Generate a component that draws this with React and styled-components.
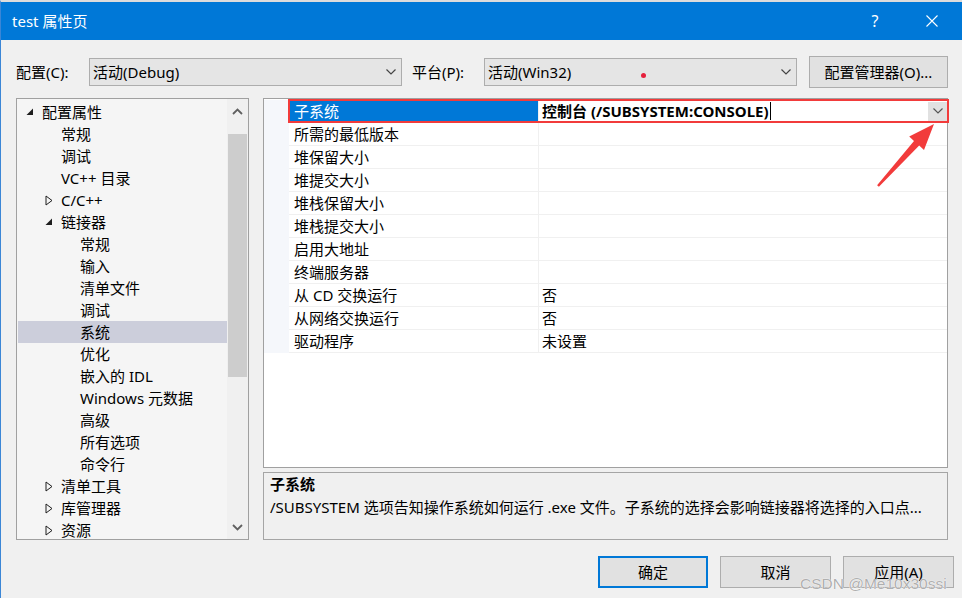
import React from 'react';
import styled, { createGlobalStyle } from 'styled-components';

const GlobalStyle = createGlobalStyle`
  html, body { margin: 0; padding: 0; background: #f0f0f0; }
  body {
    font-family: "Noto Sans", "Noto Sans CJK SC", sans-serif;
    font-size: 15px;
    color: #000;
  }
  * { box-sizing: border-box; }
`;

const Window = styled.div`
  position: relative;
  width: 962px;
  height: 598px;
  border-left: 1px solid #3b86d6;
  border-top: 2px solid #dcdcdc;
  background: #f0f0f0;
  display: flex;
  flex-direction: column;
  overflow: hidden;
`;

const TitleBar = styled.div`
  height: 38px;
  flex: none;
  background: #0078d7;
  color: #fff;
  display: flex;
  align-items: center;
  padding: 0 7px 0 11px;
  line-height: 20px;
`;

const Title = styled.div`
  flex: 1;
  font-size: 15px;
`;

const CaptionButton = styled.div`
  width: 46px;
  height: 38px;
  display: flex;
  align-items: center;
  justify-content: center;
  margin-left: ${(p) => p.$gap || 0}px;
  font-size: 16px;
  color: #fff;
`;

const ConfigRow = styled.div`
  margin-top: 16px;
  height: 32px;
  display: flex;
  align-items: center;
  padding-left: 15px;
`;

const Label = styled.div`
  width: ${(p) => p.$w}px;
  padding-left: ${(p) => p.$pl || 0}px;
  line-height: 20px;
  white-space: nowrap;
`;

const Combo = styled.div`
  position: relative;
  width: 313px;
  height: 28px;
  border: 1px solid #adadad;
  background: #e5e5e5;
  display: flex;
  align-items: center;
  padding: 0 0 0 3px;
  line-height: 20px;
`;

const ComboText = styled.div`
  flex: 1;
`;

const ComboArrow = styled.div`
  width: 20px;
  display: flex;
  align-items: center;
  justify-content: center;
`;

const Dot = styled.span`
  position: absolute;
  left: 156px;
  top: 14px;
  width: 5px;
  height: 5px;
  border-radius: 50%;
  background: #e6203c;
`;

const Button = styled.div`
  width: ${(p) => p.$w}px;
  height: 32px;
  display: flex;
  align-items: center;
  justify-content: center;
  background: #e1e1e1;
  border: ${(p) => (p.$primary ? '2px solid #0078d7' : '1px solid #adadad')};
  line-height: 20px;
  white-space: nowrap;
`;

const ManagerButton = styled(Button)`
  margin-left: 12px;
`;

const Main = styled.div`
  margin-top: 10px;
  display: flex;
  padding-left: 15px;
  height: 442px;
`;

const TreePanel = styled.div`
  width: 233px;
  height: 442px;
  border: 1px solid #a0a0a0;
  background: #f5f5f5;
  display: flex;
  overflow: hidden;
`;

const TreeList = styled.div`
  flex: 1;
  padding: 2px 0 0 1px;
  overflow: hidden;
`;

const TreeRow = styled.div`
  height: 22px;
  display: flex;
  align-items: center;
  padding-left: ${(p) => 8 + 19 * p.$level}px;
  background: ${(p) => (p.$selected ? '#cccedb' : 'transparent')};
  line-height: 20px;
  white-space: nowrap;
`;

const Glyph = styled.span`
  width: 16px;
  height: 22px;
  flex: none;
  display: flex;
  align-items: center;
`;

const ScrollBar = styled.div`
  width: 21px;
  flex: none;
  background: #f0f0f0;
  display: flex;
  flex-direction: column;
`;

const ScrollArrow = styled.div`
  height: 24px;
  display: flex;
  align-items: center;
  justify-content: center;
`;

const ScrollTrack = styled.div`
  flex: 1;
  padding: 11px 1px 0 1px;
`;

const Thumb = styled.div`
  height: 243px;
  background: #cdcdcd;
`;

const RightColumn = styled.div`
  margin-left: 14px;
  width: 685px;
  display: flex;
  flex-direction: column;
  gap: 4px;
`;

const GridPanel = styled.div`
  height: 370px;
  border: 1px solid #a0a0a0;
  background: #fff;
  padding-top: 1px;
`;

const GridRow = styled.div`
  position: relative;
  height: 23px;
  display: grid;
  grid-template-columns: 25px 249px 1fr;
  line-height: 20px;
`;

const Gutter = styled.div`
  background: #f5f7fb;
`;

const NameCell = styled.div`
  padding-left: 5px;
  display: flex;
  align-items: center;
  border-bottom: 1px solid #f0f0f0;
  background: ${(p) => (p.$selected ? '#0078d7' : 'transparent')};
  color: ${(p) => (p.$selected ? '#fff' : '#000')};
  white-space: nowrap;
`;

const ValueCell = styled.div`
  padding-left: 3px;
  display: flex;
  align-items: center;
  border-left: 1px solid #f0f0f0;
  border-bottom: 1px solid #f0f0f0;
  font-weight: ${(p) => (p.$bold ? 700 : 400)};
  white-space: nowrap;
`;

const Caret = styled.span`
  display: inline-block;
  width: 1px;
  height: 18px;
  background: #000;
  margin-left: 1px;
`;

const CellDrop = styled.div`
  margin-left: auto;
  width: 19px;
  height: 19px;
  margin-right: 0;
  background: #e1e1e1;
  display: flex;
  align-items: center;
  justify-content: center;
`;

const RedBox = styled.div`
  position: absolute;
  top: -1px;
  bottom: 0;
  left: 24px;
  right: -2px;
  border: 2px solid #f23b3b;
  pointer-events: none;
`;

const DescPanel = styled.div`
  height: 68px;
  border: 1px solid #a5a5a5;
  background: #f0f0f0;
  padding: 0 6px;
  line-height: 23px;
  white-space: nowrap;
`;

const DescTitle = styled.div`
  font-weight: 700;
`;

const Footer = styled.div`
  margin-top: 16px;
  display: flex;
  justify-content: flex-end;
  gap: 12px;
  padding-right: 8px;
`;

const Overlay = styled.svg`
  position: absolute;
  left: -1px;
  top: -2px;
  pointer-events: none;
`;

const Watermark = styled.div`
  position: absolute;
  left: 799px;
  top: 573px;
  font-family: "Liberation Sans", Arial, sans-serif;
  font-size: 15.5px;
  color: rgba(140, 140, 140, 0.7);
  text-shadow: 0 0 1px #fff, 0 0 1px #fff;
  pointer-events: none;
`;

const Chevron = ({ up, color = '#444' }) => (
  <svg width="10" height="6" viewBox="0 0 10 6">
    <polyline
      points={up ? '0.5,5.5 5,1 9.5,5.5' : '0.5,0.5 5,5 9.5,0.5'}
      fill="none"
      stroke={color}
      strokeWidth="1.2"
    />
  </svg>
);

const BoldChevron = ({ up }) => (
  <svg width="11" height="7" viewBox="0 0 11 7">
    <polyline
      points={up ? '1,6 5.5,1.5 10,6' : '1,1 5.5,5.5 10,1'}
      fill="none"
      stroke="#606060"
      strokeWidth="1.8"
    />
  </svg>
);

const Expander = ({ state }) => {
  if (state === 'open') {
    return (
      <svg width="8" height="8" viewBox="0 0 8 8">
        <polygon points="7,0.5 7,7 0.5,7" fill="#1e1e1e" />
      </svg>
    );
  }
  if (state === 'closed') {
    return (
      <svg width="8" height="11" viewBox="0 0 8 11">
        <polygon points="1,1 7,5.5 1,10" fill="none" stroke="#1e1e1e" strokeWidth="1" />
      </svg>
    );
  }
  return null;
};

const treeItems = [
  { label: '配置属性', level: 0, state: 'open' },
  { label: '常规', level: 1 },
  { label: '调试', level: 1 },
  { label: 'VC++ 目录', level: 1 },
  { label: 'C/C++', level: 1, state: 'closed' },
  { label: '链接器', level: 1, state: 'open' },
  { label: '常规', level: 2 },
  { label: '输入', level: 2 },
  { label: '清单文件', level: 2 },
  { label: '调试', level: 2 },
  { label: '系统', level: 2, selected: true },
  { label: '优化', level: 2 },
  { label: '嵌入的 IDL', level: 2 },
  { label: 'Windows 元数据', level: 2 },
  { label: '高级', level: 2 },
  { label: '所有选项', level: 2 },
  { label: '命令行', level: 2 },
  { label: '清单工具', level: 1, state: 'closed' },
  { label: '库管理器', level: 1, state: 'closed' },
  { label: '资源', level: 1, state: 'closed' },
];

const properties = [
  { name: '子系统', value: '控制台 (/SUBSYSTEM:CONSOLE)', selected: true },
  { name: '所需的最低版本', value: '' },
  { name: '堆保留大小', value: '' },
  { name: '堆提交大小', value: '' },
  { name: '堆栈保留大小', value: '' },
  { name: '堆栈提交大小', value: '' },
  { name: '启用大地址', value: '' },
  { name: '终端服务器', value: '' },
  { name: '从 CD 交换运行', value: '否' },
  { name: '从网络交换运行', value: '否' },
  { name: '驱动程序', value: '未设置' },
];

export default function App() {
  return (
    <>
      <GlobalStyle />
      <Window>
        <TitleBar>
          <Title>test 属性页</Title>
          <CaptionButton>?</CaptionButton>
          <CaptionButton $gap={11}>
            <svg width="12" height="12" viewBox="0 0 12 12">
              <path d="M0.5 0.5 L11.5 11.5 M11.5 0.5 L0.5 11.5" stroke="#fff" strokeWidth="1.1" />
            </svg>
          </CaptionButton>
        </TitleBar>

        <ConfigRow>
          <Label $w={73}>配置(C):</Label>
          <Combo>
            <ComboText>活动(Debug)</ComboText>
            <ComboArrow>
              <Chevron />
            </ComboArrow>
          </Combo>
          <Label $w={82} $pl={10}>平台(P):</Label>
          <Combo>
            <ComboText>活动(Win32)</ComboText>
            <Dot />
            <ComboArrow>
              <Chevron />
            </ComboArrow>
          </Combo>
          <ManagerButton $w={139}>配置管理器(O)...</ManagerButton>
        </ConfigRow>

        <Main>
          <TreePanel>
            <TreeList>
              {treeItems.map((it, i) => (
                <TreeRow key={i} $level={it.level} $selected={it.selected}>
                  <Glyph>
                    <Expander state={it.state} />
                  </Glyph>
                  {it.label}
                </TreeRow>
              ))}
            </TreeList>
            <ScrollBar>
              <ScrollArrow>
                <BoldChevron up />
              </ScrollArrow>
              <ScrollTrack>
                <Thumb />
              </ScrollTrack>
              <ScrollArrow>
                <BoldChevron />
              </ScrollArrow>
            </ScrollBar>
          </TreePanel>

          <RightColumn>
            <GridPanel>
              {properties.map((p, i) => (
                <GridRow key={i}>
                  <Gutter />
                  <NameCell $selected={p.selected}>{p.name}</NameCell>
                  <ValueCell $bold={p.selected}>
                    {p.value}
                    {p.selected && <Caret />}
                    {p.selected && (
                      <CellDrop>
                        <Chevron color="#555" />
                      </CellDrop>
                    )}
                  </ValueCell>
                  {p.selected && <RedBox />}
                </GridRow>
              ))}
            </GridPanel>
            <DescPanel>
              <DescTitle>子系统</DescTitle>
              <div>/SUBSYSTEM 选项告知操作系统如何运行 .exe 文件。子系统的选择会影响链接器将选择的入口点...</div>
            </DescPanel>
          </RightColumn>
        </Main>

        <Footer>
          <Button $w={110} $primary>确定</Button>
          <Button $w={111}>取消</Button>
          <Button $w={111}>应用(A)</Button>
        </Footer>

        <Overlay width="962" height="598" viewBox="0 0 962 598">
          <polygon
            points="934,124 924,150 919.2,145.6 878.9,186.8 877.1,185.2 914,141 909.2,136.6"
            fill="#f23b3b"
          />
        </Overlay>
        <Watermark>CSDN @Me10x30ssi</Watermark>
      </Window>
    </>
  );
}
